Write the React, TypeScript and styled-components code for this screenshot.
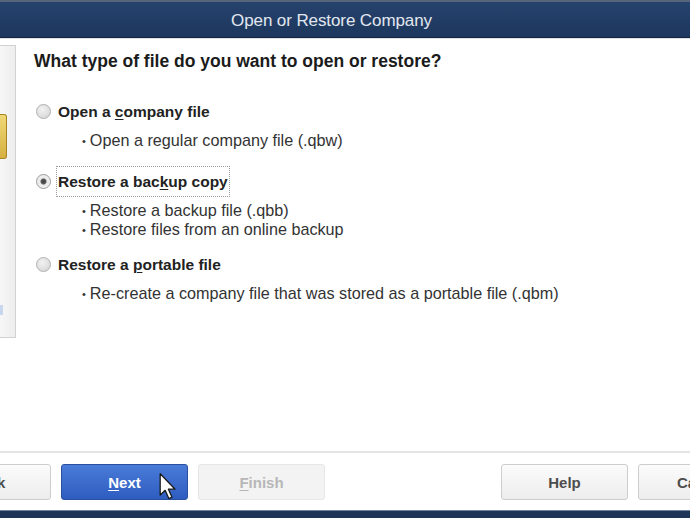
import styled, { createGlobalStyle } from 'styled-components';

const GlobalStyle = createGlobalStyle`
    html, body {
        margin: 0;
        padding: 0;
        background: #ffffff;
        overflow: hidden;
    }
    body {
        font-family: "Liberation Sans", Arial, sans-serif;
    }
`;

const Window = styled.div`
    width: 690px;
    height: 518px;
    overflow: hidden;
    display: flex;
    flex-direction: column;
    background: #ffffff;
`;

const TitleBar = styled.div`
    height: 33px;
    flex-shrink: 0;
    display: flex;
    align-items: center;
    justify-content: center;
    padding: 2px 27px 0 0;
    background: linear-gradient(#26436d, #1d375d);
    border-top: 2px solid #56657b;
    border-bottom: 1px solid #13233d;
    box-shadow: 0 1px 0 #dfe3e8;
`;

const Title = styled.div`
    color: #e2e8f0;
    font-size: 17px;
    letter-spacing: -0.1px;
`;

const Body = styled.div`
    flex: 1;
    display: flex;
    align-items: flex-start;
`;

const SidePanel = styled.div`
    width: 15px;
    height: 291px;
    margin-top: 7px;
    flex-shrink: 0;
    display: flex;
    flex-direction: column;
    background: linear-gradient(90deg, #f7f7f7, #eeeeee);
    border: 1px solid #d2d2d2;
    border-left: none;
`;

const SideButton = styled.div`
    width: 6px;
    height: 43px;
    margin-top: 68px;
    background: linear-gradient(#f0d878, #d6b040);
    border: 1px solid #a88420;
    border-left: none;
    border-radius: 0 3px 3px 0;
`;

const SideMark = styled.div`
    width: 3px;
    height: 10px;
    margin-top: 146px;
    background: #c8d6ee;
`;

const Content = styled.div`
    flex: 1;
    padding: 13px 0 0 18px;
    display: flex;
    flex-direction: column;
`;

const Heading = styled.div`
    font-size: 17.5px;
    line-height: 20px;
    font-weight: bold;
    color: #1b1b1b;
    white-space: nowrap;
`;

const Option = styled.div<{ $top: number }>`
    display: flex;
    flex-direction: column;
    margin-top: ${(p) => p.$top}px;
`;

const OptionRow = styled.div`
    display: flex;
    align-items: center;
    height: 31px;
`;

const Radio = styled.span<{ $checked?: boolean }>`
    width: 13px;
    height: 13px;
    margin-left: 2px;
    border-radius: 50%;
    border: 1px solid ${(p) => (p.$checked ? '#9a9a9a' : '#b0b0b0')};
    background: ${(p) =>
        p.$checked
            ? 'radial-gradient(circle, #3c3c3c 0, #5a5a5a 2.5px, #e9e9e9 3.5px, #f6f6f6 100%)'
            : 'radial-gradient(circle at 40% 35%, #f2f2f2, #d2d2d2)'};
    display: inline-block;
    flex-shrink: 0;
`;

const Label = styled.span<{ $focused?: boolean }>`
    height: 29px;
    margin-left: 5px;
    padding: 0 1px;
    display: flex;
    align-items: center;
    border: 1px dotted ${(p) => (p.$focused ? '#9c9c9c' : 'transparent')};
    font-size: 15.5px;
    font-weight: bold;
    color: #222222;
    white-space: nowrap;

    u {
        text-decoration-thickness: 1px;
        text-underline-offset: 2px;
    }
`;

const Bullets = styled.ul<{ $top: number }>`
    list-style: none;
    margin: ${(p) => p.$top}px 0 0 48px;
    padding: 0;
`;

const Bullet = styled.li`
    font-size: 16.2px;
    line-height: 19px;
    height: 19px;
    color: #333333;
    white-space: nowrap;

    &::before {
        content: "•";
        font-size: 11px;
        line-height: 0;
        margin-right: 4px;
        position: relative;
        top: -1px;
    }
`;

const Footer = styled.div`
    flex-shrink: 0;
    border-top: 2px solid #e4e4e4;
    padding: 11px 0 10px;
`;

const ButtonRow = styled.div`
    display: flex;
    gap: 10px;
    margin-left: -76px;
`;

const Spacer = styled.div`
    width: 156px;
    flex-shrink: 0;
`;

const Button = styled.div<{ $variant?: 'primary' | 'disabled' }>`
    position: relative;
    width: 127px;
    height: 36px;
    flex-shrink: 0;
    box-sizing: border-box;
    display: flex;
    align-items: center;
    justify-content: center;
    border-radius: 3px;
    font-size: 15px;
    font-weight: bold;
    white-space: nowrap;
    border: 1px solid
        ${(p) => (p.$variant === 'primary' ? '#2a4f9f' : p.$variant === 'disabled' ? '#e6e6e6' : '#cdcdcd')};
    background: ${(p) =>
        p.$variant === 'primary'
            ? 'linear-gradient(#4a7bd8, #2e5dc0)'
            : p.$variant === 'disabled'
            ? '#f3f3f3'
            : 'linear-gradient(#fbfbfb, #ededed)'};
    color: ${(p) => (p.$variant === 'primary' ? '#ffffff' : p.$variant === 'disabled' ? '#b7b7b7' : '#4d4d4d')};

    u {
        text-decoration-thickness: 1px;
        text-underline-offset: 2px;
    }
`;

const Cursor = styled.svg`
    position: absolute;
    left: 97px;
    top: 8px;
`;

const BottomEdge = styled.div`
    height: 7px;
    flex-shrink: 0;
    background: #1f3558;
    border-top: 1px solid #6f82a0;
`;

const options = [
    {
        top: 25,
        label: <span>Open a <u>c</u>ompany file</span>,
        bullets: ['Open a regular company file (.qbw)'],
        bulletTop: 4,
    },
    {
        top: 16,
        label: <span>Restore a bac<u>k</u>up copy</span>,
        bullets: ['Restore a backup file (.qbb)', 'Restore files from an online backup'],
        bulletTop: 4,
        checked: true,
    },
    {
        top: 10,
        label: <span>Restore a <u>p</u>ortable file</span>,
        bullets: ['Re-create a company file that was stored as a portable file (.qbm)'],
        bulletTop: 4,
    },
];

export default function App() {
    return (
        <>
            <GlobalStyle />
            <Window>
                <TitleBar>
                    <Title>Open or Restore Company</Title>
                </TitleBar>
                <Body>
                    <SidePanel>
                        <SideButton />
                        <SideMark />
                    </SidePanel>
                    <Content>
                        <Heading>What type of file do you want to open or restore?</Heading>
                        {options.map((o, i) => (
                            <Option key={i} $top={o.top}>
                                <OptionRow>
                                    <Radio $checked={o.checked} />
                                    <Label $focused={o.checked}>{o.label}</Label>
                                </OptionRow>
                                <Bullets $top={o.bulletTop}>
                                    {o.bullets.map((b) => (
                                        <Bullet key={b}>{b}</Bullet>
                                    ))}
                                </Bullets>
                            </Option>
                        ))}
                    </Content>
                </Body>
                <Footer>
                    <ButtonRow>
                        <Button><u>B</u>ack</Button>
                        <Button $variant="primary">
                            <u>N</u>ext
                            <Cursor width="18" height="27" viewBox="0 0 12 19">
                                <path
                                    d="M0.5 0.5 L0.5 15.5 L4 12.2 L6.6 18 L8.8 17 L6.3 11.4 L11 11.4 Z"
                                    fill="#ffffff"
                                    stroke="#1a1a1a"
                                    strokeWidth="0.9"
                                    strokeLinejoin="round"
                                />
                            </Cursor>
                        </Button>
                        <Button $variant="disabled"><u>F</u>inish</Button>
                        <Spacer />
                        <Button>Help</Button>
                        <Button>Cancel</Button>
                    </ButtonRow>
                </Footer>
                <BottomEdge />
            </Window>
        </>
    );
}
